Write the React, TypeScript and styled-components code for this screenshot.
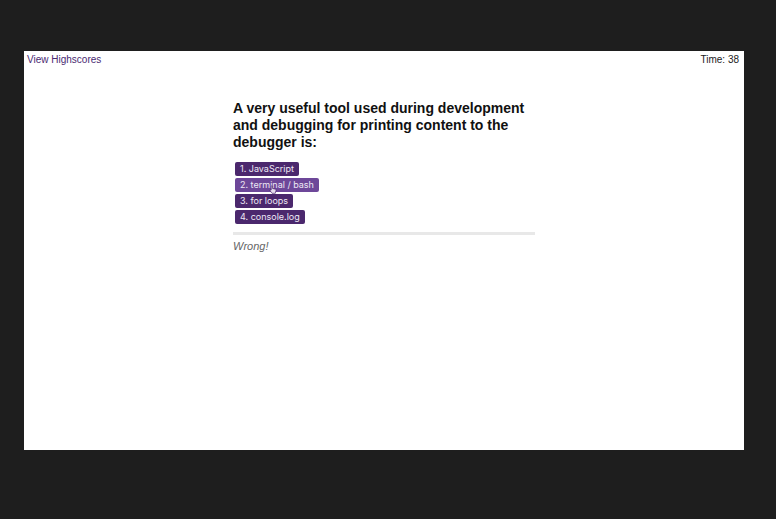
import React, { useState } from "react";
import styled, { createGlobalStyle } from "styled-components";

const GlobalStyle = createGlobalStyle`
  * {
    box-sizing: border-box;
  }

  body {
    margin: 0;
    background: #1e1e1e;
    color: #111111;
    font-family: "Liberation Sans", Arial, sans-serif;
    font-size: 10px;
    line-height: 12px;
  }
`;

const Stage = styled.div`
  display: flex;
  min-height: 100vh;
  padding: 51px 32px 69px 24px;
`;

const Page = styled.div`
  flex: 1;
  display: flex;
  flex-direction: column;
  background: #ffffff;
`;

const TopBar = styled.header`
  display: flex;
  justify-content: space-between;
  padding: 3px 5px 3px 3px;
`;

const ScoresLink = styled.a`
  color: #4a2a72;
  text-decoration: none;
`;

const Timer = styled.div`
  color: #222222;
`;

const Quiz = styled.main`
  width: 100%;
  max-width: 302px;
  margin: 31px auto 0;
`;

const Question = styled.h1`
  margin: 0 0 11px;
  font-size: 14px;
  line-height: 17px;
  font-weight: 700;
  color: #111111;
`;

const Choices = styled.ol`
  display: flex;
  flex-direction: column;
  align-items: flex-start;
  gap: 2px;
  margin: 0;
  padding: 0 2px;
  list-style: none;
`;

const ChoiceItem = styled.li`
  position: relative;
  display: flex;
`;

const Choice = styled.button<{ $active: boolean }>`
  height: 14px;
  padding: 0 5px;
  border: 0;
  border-radius: 2px;
  background: ${({ $active }) => ($active ? "#6d4799" : "#4b286d")};
  color: #eee8f5;
  font-family: Inter, "Liberation Sans", sans-serif;
  font-size: 9px;
  line-height: 14px;
  cursor: pointer;
`;

const Pointer = styled.svg`
  position: absolute;
  left: 34px;
  top: 7px;
  width: 8px;
  height: 9px;
  pointer-events: none;
`;

const Feedback = styled.p`
  margin: 8px 0 0;
  padding-top: 4px;
  border-top: 3px solid #e8e8e8;
  color: #666666;
  font-size: 11px;
  line-height: 14px;
  font-style: italic;
`;

const answers = ["JavaScript", "terminal / bash", "for loops", "console.log"];

export default function App() {
  const [selected, setSelected] = useState(1);

  return (
    <>
      <GlobalStyle />
      <Stage>
        <Page>
          <TopBar>
            <ScoresLink href="#highscores">View Highscores</ScoresLink>
            <Timer>Time: 38</Timer>
          </TopBar>
          <Quiz>
            <Question>
              A very useful tool used during development and debugging for
              printing content to the debugger is:
            </Question>
            <Choices>
              {answers.map((answer, index) => (
                <ChoiceItem key={answer}>
                  <Choice
                    type="button"
                    $active={index === selected}
                    onClick={() => setSelected(index)}
                  >
                    {`${index + 1}. ${answer}`}
                  </Choice>
                  {index === selected && (
                    <Pointer viewBox="0 0 8 9" aria-hidden="true">
                      <path
                        d="M2.2 1 Q3 0.2 3.6 1 V3.5 L6.5 4.2 Q7.3 4.5 7 5.6 L6.3 8.3 H3 L1 5.6 Q0.8 4.6 2.2 5 Z"
                        fill="#e6deee"
                        stroke="#4b286d"
                        strokeWidth="0.7"
                      />
                    </Pointer>
                  )}
                </ChoiceItem>
              ))}
            </Choices>
            <Feedback role="status">Wrong!</Feedback>
          </Quiz>
        </Page>
      </Stage>
    </>
  );
}
